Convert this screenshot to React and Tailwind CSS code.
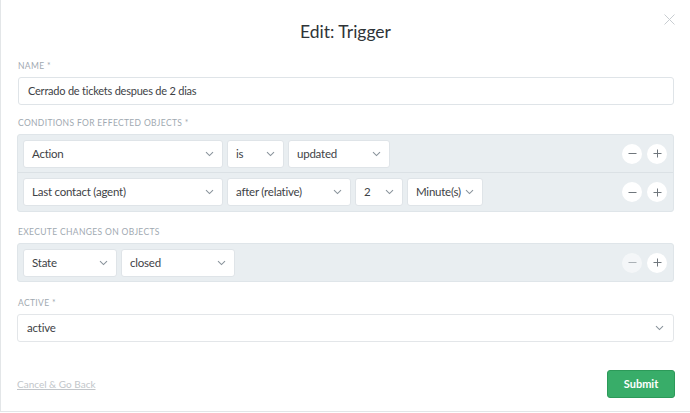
import React from 'react';

const font = { fontFamily: 'Lato, "Liberation Sans", sans-serif' };

const Chevron = () => (
  <svg width="9" height="6" viewBox="0 0 9 6" className="shrink-0">
    <path d="M1 1.2 L4.5 4.6 L8 1.2" fill="none" stroke="#8a949c" strokeWidth="1.1" />
  </svg>
);

const Select = ({ label, className = '' }) => (
  <div className={`flex items-center justify-between h-[28px] bg-white border border-[#dfe4e8] rounded-[3px] pl-[8px] pr-[8px] text-[11.5px] tracking-[-0.02em] text-[#3e4246] ${className}`}>
    <span className="whitespace-nowrap">{label}</span>
    <Chevron />
  </div>
);

const RoundButton = ({ children, faded }) => (
  <div className={`w-[20px] h-[20px] rounded-full bg-white flex items-center justify-center ${faded ? 'opacity-50' : ''}`}>
    {children}
  </div>
);

const Minus = () => (
  <svg width="9" height="9" viewBox="0 0 9 9"><path d="M0.5 4.5 H8.5" stroke="#6f767c" strokeWidth="1" /></svg>
);
const Plus = () => (
  <svg width="9" height="9" viewBox="0 0 9 9"><path d="M0.5 4.5 H8.5 M4.5 0.5 V8.5" stroke="#6f767c" strokeWidth="1" /></svg>
);

const Controls = ({ minusFaded }) => (
  <div className="ml-auto flex items-center gap-[5px] pr-[6px]">
    <RoundButton faded={minusFaded}><Minus /></RoundButton>
    <RoundButton><Plus /></RoundButton>
  </div>
);

const Label = ({ children }) => (
  <div className="text-[8.5px] leading-[10px] tracking-[0.04em] uppercase text-[#9fa9b1] mb-[6px] pl-[1px]">{children}</div>
);

export default function App() {
  return (
    <div style={font} className="w-[690px] h-[413px] bg-white overflow-hidden">
      <div className="w-full h-[412px] border-l border-b border-[#e3e6e8] relative px-[16px]">
        <button className="absolute right-[15px] top-[14px]">
          <svg width="11" height="11" viewBox="0 0 11 11"><path d="M0.5 0.5 L10.5 10.5 M10.5 0.5 L0.5 10.5" stroke="#c8cdd1" strokeWidth="1" /></svg>
        </button>
        <h1 className="text-center text-[17.5px] text-[#2f3438] pt-[19px] leading-[26px]">Edit: Trigger</h1>

        <div className="mt-[16px]">
          <Label>Name *</Label>
          <div className="h-[28px] border border-[#dfe4e8] rounded-[3px] flex items-center px-[9px] text-[11px] tracking-[-0.02em] text-[#3e4246] ml-[1px]">
            Cerrado de tickets despues de 2 dias
          </div>
        </div>

        <div className="mt-[13px]">
          <Label>Conditions for effected objects *</Label>
          <div className="bg-[#e9eef1] border border-[#dfe5e9] rounded-[3px]">
            <div className="flex items-center gap-[4px] h-[38px] pl-[5px] border-b border-[#dbe1e5]">
              <Select label="Action" className="w-[200px]" />
              <Select label="is" className="w-[57px]" />
              <Select label="updated" className="w-[102px]" />
              <Controls />
            </div>
            <div className="flex items-center gap-[4px] h-[38px] pl-[5px]">
              <Select label="Last contact (agent)" className="w-[200px]" />
              <Select label="after (relative)" className="w-[124px]" />
              <Select label="2" className="w-[48px]" />
              <Select label="Minute(s)" className="w-[76px]" />
              <Controls />
            </div>
          </div>
        </div>

        <div className="mt-[15px]">
          <Label>Execute changes on objects</Label>
          <div className="bg-[#e9eef1] border border-[#dfe5e9] rounded-[3px]">
            <div className="flex items-center gap-[4px] h-[37px] pl-[5px]">
              <Select label="State" className="w-[94px]" />
              <Select label="closed" className="w-[114px]" />
              <Controls minusFaded />
            </div>
          </div>
        </div>

        <div className="mt-[16px]">
          <Label>Active *</Label>
          <Select label="active" className="w-full border-[#e3e6e9] pl-[9px] pr-[9px]" />
        </div>

        <div className="flex items-center justify-between mt-[28px]">
          <a className="text-[10px] text-[#c2c6ca] underline">Cancel &amp; Go Back</a>
          <button className="h-[28px] w-[68px] -mr-[1px] bg-[#38ad69] border border-[#2c9a59] rounded-[3px] text-white text-[11px] font-bold">
            Submit
          </button>
        </div>
      </div>
    </div>
  );
}
